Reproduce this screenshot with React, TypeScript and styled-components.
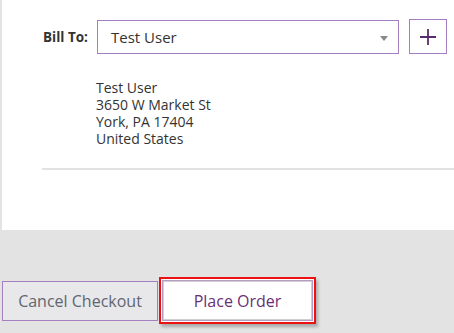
import styled, { createGlobalStyle } from "styled-components";

const GlobalStyle = createGlobalStyle`
  body {
    margin: 0;
    background: #e3e3e3;
    font-family: "Open Sans", "Liberation Sans", sans-serif;
    color: #333;
  }
`;

const Page = styled.div`
  width: 454px;
  height: 333px;
  overflow: hidden;
`;

const Panel = styled.section`
  margin-left: 2px;
  height: 230px;
  background: #fff;
  box-sizing: border-box;
  padding-top: 20px;
`;

const BillRow = styled.div`
  display: flex;
  align-items: center;
  padding-left: 41px;
`;

const Label = styled.label`
  font-weight: 700;
  font-size: 13.5px;
  width: 54px;
  color: #333;
`;

const Select = styled.div`
  position: relative;
  width: 302px;
  height: 34px;
  box-sizing: border-box;
  border: 1px solid #a57fbf;
  display: flex;
  align-items: center;
  padding-left: 13px;
  font-size: 15px;
  color: #333;
`;

const Caret = styled.span`
  position: absolute;
  right: 10px;
  top: 15px;
  width: 0;
  height: 0;
  border-left: 4px solid transparent;
  border-right: 4px solid transparent;
  border-top: 5px solid #888;
`;

const AddBtn = styled.button`
  margin-left: 10px;
  width: 38px;
  height: 35px;
  margin-top: -1px;
  box-sizing: border-box;
  border: 1px solid #a57fbf;
  background: #fff;
  display: flex;
  align-items: center;
  justify-content: center;
  padding: 0;
`;

const Address = styled.address`
  font-style: normal;
  font-size: 14px;
  margin: 25px 0 0 94px;
  color: #333;
`;

const Line = styled.div`
  height: 17px;
  line-height: 17px;
`;

const Divider = styled.hr`
  margin: 21px 0 0 40px;
  border: 0;
  height: 2px;
  background: #e2e2e2;
`;

const Actions = styled.div`
  display: flex;
  align-items: center;
  padding: 47px 0 0 2px;
`;

const CancelBtn = styled.button`
  width: 156px;
  height: 40px;
  box-sizing: border-box;
  border: 1px solid #a57fbf;
  background: #e8e8ea;
  color: #5f6670;
  font-family: "Open Sans", "Liberation Sans", sans-serif;
  font-size: 16px;
  padding: 0;
`;

const Focus = styled.div`
  margin-left: 1px;
  border: 2px solid #ee1111;
  padding: 1px;
  box-shadow: 2px 3px 3px rgba(0, 0, 0, 0.25);
  background: #fff;
`;

const PlaceBtn = styled.button`
  display: block;
  width: 151px;
  height: 41px;
  box-sizing: border-box;
  border: 1px solid #b49cc4;
  box-shadow: inset 0 0 0 1px #cfcfcf;
  background: #fff;
  color: #6a2f78;
  font-family: "Open Sans", "Liberation Sans", sans-serif;
  font-size: 16px;
  padding: 0;
`;

const address = ["Test User", "3650 W Market St", "York, PA 17404", "United States"];

export default function App() {
  return (
    <Page>
      <GlobalStyle />
      <Panel>
        <BillRow>
          <Label>Bill To:</Label>
          <Select>
            Test User
            <Caret />
          </Select>
          <AddBtn aria-label="Add address">
            <svg width="18" height="18" viewBox="0 0 18 18">
              <path d="M9 1v16M1 9h16" stroke="#5b2a6e" strokeWidth="1.8" />
            </svg>
          </AddBtn>
        </BillRow>
        <Address>
          {address.map((l) => (
            <Line key={l}>{l}</Line>
          ))}
        </Address>
        <Divider />
      </Panel>
      <Actions>
        <CancelBtn>Cancel Checkout</CancelBtn>
        <Focus>
          <PlaceBtn>Place Order</PlaceBtn>
        </Focus>
      </Actions>
    </Page>
  );
}
